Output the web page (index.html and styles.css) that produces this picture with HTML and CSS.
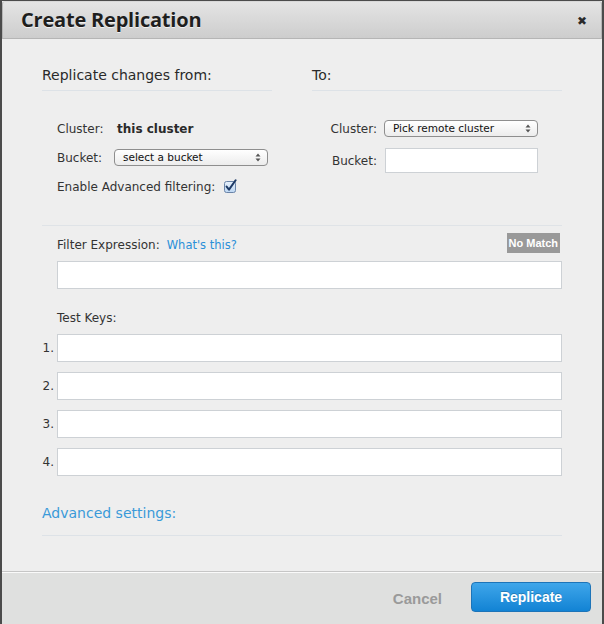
FILE: index.html
```html
<!DOCTYPE html>
<html>
<head>
<meta charset="utf-8">
<link rel="stylesheet" href="styles.css">
</head>
<body>
<div class="dialog">
  <div class="header">
    <h1 class="title">Create Replication</h1>
    <span class="close">&#x2716;</span>
  </div>
  <div class="body">
    <div class="columns">
      <div class="col col-left">
        <h2 class="col-title">Replicate changes from:</h2>
        <div class="rows">
          <div class="row"><span class="lbl lbl-left">Cluster:</span><strong class="value">this cluster</strong></div>
          <div class="row"><span class="lbl lbl-left">Bucket:</span>
            <div class="select">select a bucket
              <svg class="arrows" width="6" height="9" viewBox="0 0 6 9"><path d="M0.5 3.5 L3 0.5 L5.5 3.5 Z M0.5 5.5 L3 8.5 L5.5 5.5 Z" fill="#555"/></svg>
            </div>
          </div>
          <div class="row"><span class="lbl">Enable Advanced filtering:</span>
            <svg class="check" width="14" height="14" viewBox="0 0 14 14">
              <defs><linearGradient id="cb" x1="0" y1="0" x2="0" y2="1"><stop offset="0" stop-color="#e8f1fb"/><stop offset="1" stop-color="#bcd6f2"/></linearGradient></defs>
              <rect x="1.5" y="2.5" width="11" height="11" rx="2" fill="url(#cb)" stroke="#6a84a8"/>
              <path d="M3.6 7.6 L6 10.6 L12.6 1.2" fill="none" stroke="#1d3a66" stroke-width="2" stroke-linecap="round" stroke-linejoin="round"/>
            </svg>
          </div>
        </div>
      </div>
      <div class="col col-right">
        <h2 class="col-title">To:</h2>
        <div class="rows">
          <div class="row"><span class="lbl lbl-right">Cluster:</span>
            <div class="select">Pick remote cluster
              <svg class="arrows" width="6" height="9" viewBox="0 0 6 9"><path d="M0.5 3.5 L3 0.5 L5.5 3.5 Z M0.5 5.5 L3 8.5 L5.5 5.5 Z" fill="#555"/></svg>
            </div>
          </div>
          <div class="row row-input"><span class="lbl lbl-right">Bucket:</span><div class="field field-bucket"></div></div>
        </div>
      </div>
    </div>

    <div class="filter">
      <div class="filter-head">
        <span class="lbl">Filter Expression:</span>
        <a class="link">What's this?</a>
        <span class="badge">No Match</span>
      </div>
      <div class="field field-wide"></div>
      <div class="keys-label">Test Keys:</div>
      <ol class="keys">
        <li class="key"><span class="num">1.</span><div class="field field-key"></div></li>
        <li class="key"><span class="num">2.</span><div class="field field-key"></div></li>
        <li class="key"><span class="num">3.</span><div class="field field-key"></div></li>
        <li class="key"><span class="num">4.</span><div class="field field-key"></div></li>
      </ol>
    </div>

    <div class="advanced">Advanced settings:</div>
  </div>
  <div class="footer">
    <span class="cancel">Cancel</span>
    <button class="primary">Replicate</button>
  </div>
</div>
</body>
</html>
```

FILE: styles.css
```css
* { box-sizing: border-box; }
html, body { margin: 0; padding: 0; }
body {
  width: 604px;
  height: 624px;
  background: #4b4b4b;
  font-family: "DejaVu Sans", Verdana, sans-serif;
  color: #333;
  overflow: hidden;
}
.dialog {
  width: 604px;
  height: 624px;
  border-left: 2px solid #4b4b4b;
  border-right: 2px solid #4b4b4b;
  border-top: 1px solid #4b4b4b;
  display: flex;
  flex-direction: column;
  background: #eeeeee;
}
.header {
  height: 38px;
  flex: none;
  display: flex;
  align-items: center;
  justify-content: space-between;
  padding: 0 14px 0 18px;
  background: linear-gradient(#e4e4e4, #cdcdcd);
  border: 1px solid #b5b5b5;
  border-top-color: #d8d8d8;
  border-radius: 3px 3px 0 0;
}
.title {
  margin: 0;
  font-family: "Open Sans", sans-serif;
  font-weight: 700;
  font-size: 20px;
  letter-spacing: -0.2px;
  color: #1e1e1e;
  text-shadow: 0 1px 0 rgba(255,255,255,0.7);
  line-height: 1;
}
.close {
  font-size: 12px;
  color: #2a2a2a;
  margin-top: 2px;
}
.body {
  flex: 1;
  padding: 26px 40px 0 40px;
}
.columns {
  display: flex;
  gap: 40px;
  padding-bottom: 24px;
  border-bottom: 1px solid #dfe3e7;
}
.col-left { width: 230px; }
.col-right { width: 250px; }
.col-title {
  margin: 0;
  font-weight: normal;
  font-size: 14px;
  line-height: 20px;
  padding-bottom: 5px;
  border-bottom: 1px solid #dde2e7;
  color: #2a2a2a;
}
.rows { margin-top: 23px; }
.row {
  height: 29px;
  display: flex;
  align-items: center;
  font-size: 12px;
}
.col-left .row { padding-left: 15px; }
.lbl { font-size: 12px; color: #333; }
.lbl-left { width: 57px; }
.lbl-right { width: 65px; text-align: right; margin-right: 7px; }
.value {
  font-weight: bold;
  font-size: 12px;
  margin-left: 3px;
  color: #2a2a2a;
}
.select {
  width: 154px;
  height: 17px;
  border: 1px solid #8e8e8e;
  border-radius: 4px;
  background: linear-gradient(#ffffff, #ececec);
  font-size: 10.5px;
  color: #111;
  padding-left: 8px;
  display: flex;
  align-items: center;
  justify-content: space-between;
  padding-right: 6px;
  line-height: 1;
}
.arrows { display: block; }
.check { margin-left: 8px; margin-top: -2px; }
.row-input { height: 25px; margin-top: 5px; }
.field {
  background: #fff;
  border: 1px solid #cdd1d5;
}
.field-bucket { width: 153px; height: 25px; margin-left: 1px; }
.filter { padding-top: 7px; }
.filter-head {
  height: 20px;
  display: flex;
  align-items: center;
  padding-left: 15px;
}
.filter-head .lbl, .filter-head .link { margin-top: 3px; }
.link {
  color: #2a8fd8;
  font-size: 11.5px;
  margin-left: 7px;
}
.badge {
  margin-left: auto;
  margin-right: 2px;
  background: #999999;
  color: #fff;
  font-family: "Liberation Sans", Arial, sans-serif;
  font-weight: bold;
  font-size: 11px;
  height: 20px;
  line-height: 20px;
  padding: 0 2px;
}
.field-wide {
  margin: 8px 0 0 15px;
  height: 28px;
}
.keys-label {
  margin-top: 19px;
  padding-left: 15px;
  font-size: 12px;
  line-height: 20px;
}
.keys {
  list-style: none;
  margin: 6px 0 0 0;
  padding: 0;
  display: flex;
  flex-direction: column;
  gap: 10px;
}
.key { display: flex; align-items: center; }
.num {
  width: 15px;
  text-align: right;
  padding-right: 3px;
  font-size: 12px;
  color: #333;
}
.field-key { flex: 1; height: 28px; }
.advanced {
  margin-top: 27px;
  font-size: 14px;
  line-height: 20px;
  color: #3a9ad9;
  padding-bottom: 12px;
  border-bottom: 1px solid #dde2e7;
}
.footer {
  height: 53px;
  flex: none;
  background: #dfe0df;
  border-top: 1px solid #c6c6c6;
  box-shadow: inset 0 1px 0 #fafafa;
  display: flex;
  align-items: center;
  justify-content: flex-end;
  padding: 0 11px 2px 0;
}
.cancel {
  font-family: "Liberation Sans", Arial, sans-serif;
  font-weight: bold;
  font-size: 15px;
  color: #9a9a9a;
  margin-right: 29px;
  margin-top: 3px;
}
.primary {
  width: 120px;
  height: 30px;
  border: 1px solid #1d74b8;
  border-radius: 4px;
  background: linear-gradient(#3fa6ea, #1283d4);
  color: #fff;
  font-family: "Liberation Sans", Arial, sans-serif;
  font-weight: bold;
  font-size: 14px;
  padding: 0;
  text-shadow: 0 -1px 0 rgba(0,0,0,0.2);
}
```
